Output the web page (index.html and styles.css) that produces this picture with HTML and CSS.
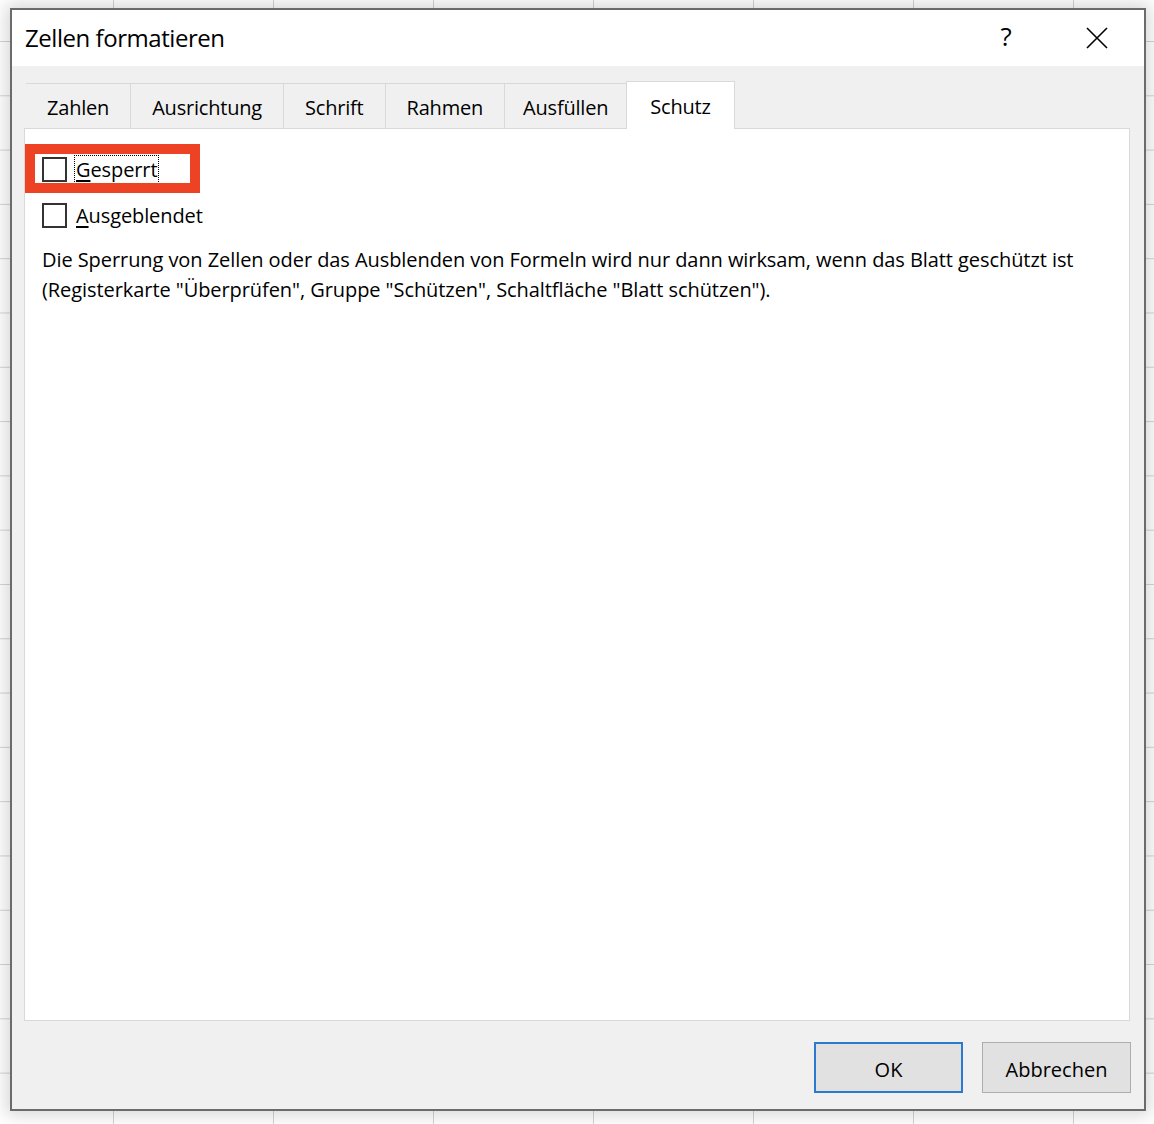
FILE: index.html
```html
<!DOCTYPE html>
<html lang="de">
<head>
<meta charset="utf-8">
<title>Zellen formatieren</title>
<link rel="stylesheet" href="styles.css">
</head>
<body>
<div class="dialog">
  <div class="titlebar">
    <div class="title">Zellen formatieren</div>
    <div class="help">?</div>
    <div class="close">
      <svg width="22" height="22" viewBox="0 0 22 22"><path d="M1 1 L21 21 M21 1 L1 21" stroke="#000" stroke-width="1.6" fill="none"/></svg>
    </div>
  </div>
  <div class="main">
    <div class="tabs">
      <div class="tab">Zahlen</div>
      <div class="tab">Ausrichtung</div>
      <div class="tab">Schrift</div>
      <div class="tab">Rahmen</div>
      <div class="tab tab-narrow">Ausfüllen</div>
      <div class="tab active">Schutz</div>
    </div>
    <div class="panel">
      <div class="annot"></div>
      <label class="check"><span class="box"></span><span class="lbl focus"><u>G</u>esperrt</span></label>
      <label class="check"><span class="box"></span><span class="lbl"><u>A</u>usgeblendet</span></label>
      <p class="desc">Die Sperrung von Zellen oder das Ausblenden von Formeln wird nur dann wirksam, wenn das Blatt geschützt ist<br>(Registerkarte "Überprüfen", Gruppe "Schützen", Schaltfläche "Blatt schützen").</p>
    </div>
    <div class="buttons">
      <button class="btn default">OK</button>
      <button class="btn">Abbrechen</button>
    </div>
  </div>
</div>
</body>
</html>
```
FILE: styles.css
```css
html, body {
  margin: 0;
}
body {
  width: 1154px;
  height: 1124px;
  overflow: hidden;
  box-sizing: border-box;
  padding: 8px 0 0 10px;
  background-color: #fff;
  background-image:
    linear-gradient(to right, #d4d4d4 0, #d4d4d4 1px, transparent 1px),
    linear-gradient(to bottom, #d4d4d4 0, #d4d4d4 1px, transparent 1px);
  background-size: 160px 100%, 100% 54.3px;
  background-position: 113px 0, 0 41px;
  font-family: "Open Sans", "Noto Sans", sans-serif;
  color: #000;
}
.dialog {
  width: 1136px;
  height: 1103px;
  box-sizing: border-box;
  border: 2px solid #6b6b6b;
  background: #f0f0f0;
  box-shadow: 0 0 16px 4px rgba(0, 0, 0, 0.16);
  display: flex;
  flex-direction: column;
}
.titlebar {
  height: 56px;
  flex: none;
  background: #fff;
  display: flex;
  align-items: center;
  padding: 0 17px 0 13px;
}
.title {
  flex: 1;
  font-size: 24px;
  letter-spacing: -0.45px;
  margin-top: -2px;
}
.help {
  width: 40px;
  text-align: center;
  font-size: 26px;
  margin-right: 41px;
  margin-top: -4px;
}
.close {
  width: 60px;
  display: flex;
  justify-content: center;
  align-items: center;
}
.main {
  flex: 1;
  display: flex;
  flex-direction: column;
  padding: 15px 14px 16px 12px;
  min-height: 0;
}
.tabs {
  display: flex;
  align-items: flex-end;
  height: 48px;
  padding-left: 2px;
  flex: none;
}
.tab {
  height: 45px;
  margin-bottom: 1px;
  box-sizing: border-box;
  border-top: 1px solid #d9d9d9;
  border-right: 1px solid #d9d9d9;
  padding: 2px 21px 0;
  display: flex;
  align-items: center;
  font-size: 20px;
  letter-spacing: -0.2px;
  color: #000;
}
.tab.tab-narrow {
  padding: 2px 18px 0;
}
.tab.active {
  height: 48px;
  margin-bottom: 0;
  margin-left: -1px;
  border-left: 1px solid #d9d9d9;
  background: #fff;
  position: relative;
  z-index: 1;
  padding: 1px 23px 0;
}
.panel {
  flex: 1;
  margin-top: -1px;
  background: #fff;
  border: 1px solid #d9d9d9;
  position: relative;
  padding: 28px 16px 0 17px;
}
.annot {
  position: absolute;
  left: 0;
  top: 15px;
  width: 175px;
  height: 49px;
  box-sizing: border-box;
  border: 10px solid #ee4224;
}
.check {
  display: flex;
  align-items: center;
  height: 25px;
  margin-bottom: 21px;
  font-size: 20px;
  letter-spacing: -0.1px;
}
.box {
  width: 25px;
  height: 25px;
  box-sizing: border-box;
  border: 2px solid #333;
  background: #fff;
  margin-right: 8px;
  position: relative;
  z-index: 1;
}
.lbl {
  line-height: 27px;
  height: 27px;
  padding: 0 1px;
}
.lbl u {
  text-underline-offset: 3px;
}
.focus {
  outline: 1px dotted #000;
}
.desc {
  margin: -4px 0 0 0;
  font-size: 20px;
  line-height: 30px;
  letter-spacing: -0.07px;
}
.buttons {
  flex: none;
  display: flex;
  justify-content: flex-end;
  gap: 19px;
  margin-top: 21px;
  margin-right: -1px;
}
.btn {
  width: 149px;
  height: 51px;
  box-sizing: border-box;
  background: #e1e1e1;
  border: 1px solid #adadad;
  font-family: "Open Sans", "Noto Sans", sans-serif;
  font-size: 20px;
  color: #000;
  padding: 3px 0 0;
}
.btn.default {
  border: 2px solid #2a7ad2;
}
```
